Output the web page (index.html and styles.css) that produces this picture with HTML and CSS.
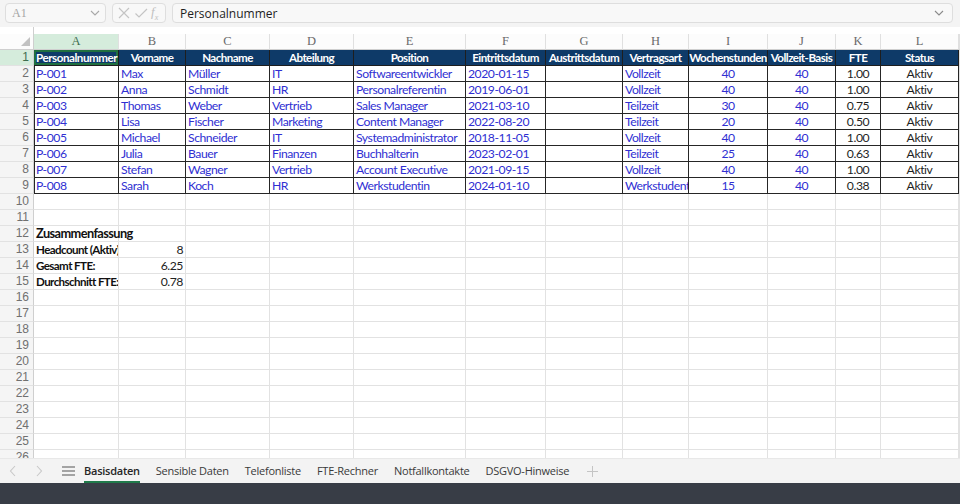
FILE: index.html
```html
<!DOCTYPE html>
<html lang="de">
<head>
<meta charset="utf-8">
<title>Basisdaten</title>
<link rel="stylesheet" href="styles.css">
</head>
<body>
<div class="toolbar">
  <div class="namebox"><span>A1</span>
    <svg width="10" height="6" viewBox="0 0 10 6"><path d="M1 1 L5 5 L9 1" fill="none" stroke="#a8a8a8" stroke-width="1.1"/></svg>
  </div>
  <div class="fxbox">
    <svg width="14" height="14" viewBox="0 0 14 14"><path d="M2 2 L12 12 M12 2 L2 12" stroke="#c4c4c4" stroke-width="1.2"/></svg>
    <svg width="14" height="14" viewBox="0 0 14 14"><path d="M1.5 7.5 L5 11 L13 3" fill="none" stroke="#c4c4c4" stroke-width="1.2"/></svg>
    <span class="fx">f<sub>x</sub></span>
  </div>
  <div class="formula"><span>Personalnummer</span>
    <svg width="10" height="6" viewBox="0 0 10 6"><path d="M1 1 L5 5 L9 1" fill="none" stroke="#8a8a8a" stroke-width="1.1"/></svg>
  </div>
</div>

<div class="sheet">
<table class="grid">
<colgroup>
<col class="c-rh"><col class="c-a"><col class="c-b"><col class="c-c"><col class="c-d"><col class="c-e"><col class="c-f"><col class="c-g"><col class="c-h"><col class="c-i"><col class="c-j"><col class="c-k"><col class="c-l"><col class="c-m">
</colgroup>
<tr class="spacer"><th class="corner-top"></th><td colspan="13"></td></tr>
<tr class="colhead"><th class="corner"><span class="tri"></span></th><th class="sel">A</th><th>B</th><th>C</th><th>D</th><th>E</th><th>F</th><th>G</th><th>H</th><th>I</th><th>J</th><th>K</th><th>L</th><th></th></tr>
<tr class="hdr"><th class="rh sel">1</th><td class="first active">Personalnummer</td><td>Vorname</td><td>Nachname</td><td>Abteilung</td><td>Position</td><td>Eintrittsdatum</td><td>Austrittsdatum</td><td>Vertragsart</td><td>Wochenstunden</td><td>Vollzeit-Basis</td><td>FTE</td><td>Status</td><td class="m"></td></tr>
<tr class="dat"><th class="rh">2</th><td class="first">P-001</td><td>Max</td><td>Müller</td><td>IT</td><td>Softwareentwickler</td><td>2020-01-15</td><td></td><td>Vollzeit</td><td class="ctr">40</td><td class="ctr">40</td><td class="ctr blk">1.00</td><td class="ctr blk">Aktiv</td><td class="m"></td></tr>
<tr class="dat"><th class="rh">3</th><td class="first">P-002</td><td>Anna</td><td>Schmidt</td><td>HR</td><td>Personalreferentin</td><td>2019-06-01</td><td></td><td>Vollzeit</td><td class="ctr">40</td><td class="ctr">40</td><td class="ctr blk">1.00</td><td class="ctr blk">Aktiv</td><td class="m"></td></tr>
<tr class="dat"><th class="rh">4</th><td class="first">P-003</td><td>Thomas</td><td>Weber</td><td>Vertrieb</td><td>Sales Manager</td><td>2021-03-10</td><td></td><td>Teilzeit</td><td class="ctr">30</td><td class="ctr">40</td><td class="ctr blk">0.75</td><td class="ctr blk">Aktiv</td><td class="m"></td></tr>
<tr class="dat"><th class="rh">5</th><td class="first">P-004</td><td>Lisa</td><td>Fischer</td><td>Marketing</td><td>Content Manager</td><td>2022-08-20</td><td></td><td>Teilzeit</td><td class="ctr">20</td><td class="ctr">40</td><td class="ctr blk">0.50</td><td class="ctr blk">Aktiv</td><td class="m"></td></tr>
<tr class="dat"><th class="rh">6</th><td class="first">P-005</td><td>Michael</td><td>Schneider</td><td>IT</td><td>Systemadministrator</td><td>2018-11-05</td><td></td><td>Vollzeit</td><td class="ctr">40</td><td class="ctr">40</td><td class="ctr blk">1.00</td><td class="ctr blk">Aktiv</td><td class="m"></td></tr>
<tr class="dat"><th class="rh">7</th><td class="first">P-006</td><td>Julia</td><td>Bauer</td><td>Finanzen</td><td>Buchhalterin</td><td>2023-02-01</td><td></td><td>Teilzeit</td><td class="ctr">25</td><td class="ctr">40</td><td class="ctr blk">0.63</td><td class="ctr blk">Aktiv</td><td class="m"></td></tr>
<tr class="dat"><th class="rh">8</th><td class="first">P-007</td><td>Stefan</td><td>Wagner</td><td>Vertrieb</td><td>Account Executive</td><td>2021-09-15</td><td></td><td>Vollzeit</td><td class="ctr">40</td><td class="ctr">40</td><td class="ctr blk">1.00</td><td class="ctr blk">Aktiv</td><td class="m"></td></tr>
<tr class="dat"><th class="rh">9</th><td class="first">P-008</td><td>Sarah</td><td>Koch</td><td>HR</td><td>Werkstudentin</td><td>2024-01-10</td><td></td><td>Werkstudent</td><td class="ctr">15</td><td class="ctr">40</td><td class="ctr blk">0.38</td><td class="ctr blk">Aktiv</td><td class="m"></td></tr>
<tr><th class="rh">10</th><td></td><td></td><td></td><td></td><td></td><td></td><td></td><td></td><td></td><td></td><td></td><td></td><td></td></tr>
<tr><th class="rh">11</th><td></td><td></td><td></td><td></td><td></td><td></td><td></td><td></td><td></td><td></td><td></td><td></td><td></td></tr>
<tr><th class="rh">12</th><td class="spill title">Zusammenfassung</td><td></td><td></td><td></td><td></td><td></td><td></td><td></td><td></td><td></td><td></td><td></td><td></td></tr>
<tr><th class="rh">13</th><td class="lbl">Headcount (Aktiv)</td><td class="num">8</td><td></td><td></td><td></td><td></td><td></td><td></td><td></td><td></td><td></td><td></td><td></td></tr>
<tr><th class="rh">14</th><td class="lbl">Gesamt FTE:</td><td class="num">6.25</td><td></td><td></td><td></td><td></td><td></td><td></td><td></td><td></td><td></td><td></td><td></td></tr>
<tr><th class="rh">15</th><td class="lbl">Durchschnitt FTE:</td><td class="num">0.78</td><td></td><td></td><td></td><td></td><td></td><td></td><td></td><td></td><td></td><td></td><td></td></tr>
<tr><th class="rh">16</th><td></td><td></td><td></td><td></td><td></td><td></td><td></td><td></td><td></td><td></td><td></td><td></td><td></td></tr>
<tr><th class="rh">17</th><td></td><td></td><td></td><td></td><td></td><td></td><td></td><td></td><td></td><td></td><td></td><td></td><td></td></tr>
<tr><th class="rh">18</th><td></td><td></td><td></td><td></td><td></td><td></td><td></td><td></td><td></td><td></td><td></td><td></td><td></td></tr>
<tr><th class="rh">19</th><td></td><td></td><td></td><td></td><td></td><td></td><td></td><td></td><td></td><td></td><td></td><td></td><td></td></tr>
<tr><th class="rh">20</th><td></td><td></td><td></td><td></td><td></td><td></td><td></td><td></td><td></td><td></td><td></td><td></td><td></td></tr>
<tr><th class="rh">21</th><td></td><td></td><td></td><td></td><td></td><td></td><td></td><td></td><td></td><td></td><td></td><td></td><td></td></tr>
<tr><th class="rh">22</th><td></td><td></td><td></td><td></td><td></td><td></td><td></td><td></td><td></td><td></td><td></td><td></td><td></td></tr>
<tr><th class="rh">23</th><td></td><td></td><td></td><td></td><td></td><td></td><td></td><td></td><td></td><td></td><td></td><td></td><td></td></tr>
<tr><th class="rh">24</th><td></td><td></td><td></td><td></td><td></td><td></td><td></td><td></td><td></td><td></td><td></td><td></td><td></td></tr>
<tr><th class="rh">25</th><td></td><td></td><td></td><td></td><td></td><td></td><td></td><td></td><td></td><td></td><td></td><td></td><td></td></tr>
<tr><th class="rh">26</th><td></td><td></td><td></td><td></td><td></td><td></td><td></td><td></td><td></td><td></td><td></td><td></td><td></td></tr>
</table>
</div>

<div class="tabbar">
  <span class="nav"><svg width="8" height="12" viewBox="0 0 8 12"><path d="M6 1 L1.5 6 L6 11" fill="none" stroke="#c8c8c8" stroke-width="1.1"/></svg></span>
  <span class="nav"><svg width="8" height="12" viewBox="0 0 8 12"><path d="M2 1 L6.5 6 L2 11" fill="none" stroke="#c8c8c8" stroke-width="1.1"/></svg></span>
  <span class="menu"><svg width="13" height="10" viewBox="0 0 13 10"><path d="M0 1 H13 M0 5 H13 M0 9 H13" stroke="#555" stroke-width="1.2"/></svg></span>
  <span class="tab active">Basisdaten</span>
  <span class="tab">Sensible Daten</span>
  <span class="tab">Telefonliste</span>
  <span class="tab">FTE-Rechner</span>
  <span class="tab">Notfallkontakte</span>
  <span class="tab">DSGVO-Hinweise</span>
  <span class="plus"><svg width="11" height="11" viewBox="0 0 11 11"><path d="M5.5 0 V11 M0 5.5 H11" stroke="#c4c4c4" stroke-width="1"/></svg></span>
</div>
<div class="dock"></div>
</body>
</html>
```
FILE: styles.css
```css
* { box-sizing: border-box; }
html, body { margin: 0; padding: 0; }
body {
  width: 960px;
  height: 504px;
  overflow: hidden;
  display: flex;
  flex-direction: column;
  background: #ffffff;
  font-family: Lato, "Liberation Sans", sans-serif;
}

/* ---------- formula bar ---------- */
.toolbar {
  height: 27px;
  flex: none;
  display: flex;
  align-items: center;
  gap: 6px;
  padding: 0 7px 1px 5px;
  background: #f4f4f4;
}
.namebox {
  width: 101px;
  height: 20px;
  display: flex;
  align-items: center;
  justify-content: space-between;
  padding: 0 5px 0 6px;
  border: 1px solid #dedede;
  border-radius: 4px;
  background: #f8f8f8;
  color: #a5a5a5;
  font: 12px "Liberation Serif", serif;
}
.fxbox {
  width: 54px;
  height: 20px;
  display: flex;
  align-items: center;
  gap: 3px;
  padding: 0 3px 0 4px;
  border: 1px solid #dedede;
  border-radius: 4px;
  background: #f8f8f8;
}
.fx {
  font: italic 13px "Liberation Serif", serif;
  color: #c0c0c0;
  line-height: 1;
}
.fx sub { font-size: 8px; }
.formula {
  flex: 1;
  height: 20px;
  display: flex;
  align-items: center;
  justify-content: space-between;
  padding: 0 8px 0 7px;
  border: 1px solid #dedede;
  border-radius: 4px;
  background: #f8f8f8;
  color: #1e1e1e;
  font: 12px "Open Sans", "Liberation Sans", sans-serif;
}

/* ---------- grid ---------- */
.sheet {
  flex: 1;
  overflow: hidden;
  background: #fff;
}
.grid {
  table-layout: fixed;
  width: 960px;
  border-collapse: separate;
  border-spacing: 0;
  font-size: 12.2px;
  letter-spacing: -0.45px;
}
.c-rh { width: 34px; }
.c-a { width: 85px; }
.c-b { width: 67px; }
.c-c { width: 84px; }
.c-d { width: 84px; }
.c-e { width: 112px; }
.c-f { width: 80px; }
.c-g { width: 77px; }
.c-h { width: 66px; }
.c-i { width: 79px; }
.c-j { width: 68px; }
.c-k { width: 45px; }
.c-l { width: 78px; }
.c-m { width: 1px; }

.grid td, .grid th {
  height: 16px;
  padding: 0 2px;
  border-right: 1px solid #e2e2e2;
  border-bottom: 1px solid #e2e2e2;
  white-space: nowrap;
  overflow: hidden;
  line-height: 15px;
  font-weight: normal;
}
.grid tr.spacer td, .grid tr.spacer th {
  height: 7px;
  line-height: 0;
  border-bottom: none;
}
.grid tr.spacer td { border-right: none; }
.grid tr.spacer th.corner-top { border-right: 1px solid #cfcfcf; }

/* column letters */
.colhead th {
  height: 15px;
  line-height: 14px;
  text-align: center;
  font: 12.5px "Liberation Serif", serif;
  letter-spacing: 0;
  color: #6a6a6a;
  background: #fcfcfc;
  border-right: 1px solid #e0e0e0;
  border-bottom: 1px solid #cfcfcf;
}
.colhead th.corner {
  position: relative;
  border-right: 1px solid #cfcfcf;
}
.tri {
  position: absolute;
  right: 3px;
  bottom: 3px;
  width: 0;
  height: 0;
  border-left: 9px solid transparent;
  border-bottom: 9px solid #c2c2c2;
}
.colhead th.sel {
  background: #d5ecdc;
  color: #3e6d50;
}

/* row numbers */
.grid th.rh {
  text-align: right;
  padding: 0 4px 0 0;
  font: 12px "Liberation Sans", sans-serif;
  letter-spacing: 0;
  color: #707070;
  background: #f5f5f5;
  border-right: 1px solid #cfcfcf;
  line-height: 15px;
}
.grid th.rh.sel { background: #d5ecdc; color: #3e6d50; }

/* header row of the table */
.hdr td {
  background: #0e3a68;
  color: #ffffff;
  font-weight: bold;
  font-size: 11.6px;
  letter-spacing: -0.55px;
  text-align: center;
  border-right: 1px solid #1e1e1e;
  border-bottom: 1px solid #1e1e1e;
  padding: 0;
}
.hdr td.first { text-align: left; padding-left: 2px; letter-spacing: -0.45px; }
.hdr td.active {
  box-shadow: inset 0 0 0 2px #1f7040;
}
.grid td.m { background: transparent; border-right-color: #e2e2e2; border-bottom-color: #e2e2e2; box-shadow: none; }

/* data rows */
.dat td {
  color: #2f2fd2;
  border-right: 1px solid #262626;
  border-bottom: 1px solid #262626;
}
.dat td.first { box-shadow: inset 1px 0 0 #262626; }
.dat td.ctr { text-align: center; }
.dat td.blk { color: #1f1f1f; }

/* summary block */
.grid td.spill { overflow: visible; }
.grid td.title { font-size: 12.8px; font-weight: bold; color: #111; letter-spacing: -0.6px; }
.grid td.lbl { font-weight: bold; font-size: 11.6px; color: #111; letter-spacing: -0.6px; }
.grid td.num { text-align: right; color: #222; }

/* ---------- sheet tabs ---------- */
.tabbar {
  height: 25px;
  flex: none;
  display: flex;
  align-items: center;
  background: #f3f3f3;
  border-top: 1px solid #e8e8e8;
  padding-left: 9px;
  font: 11px "Open Sans", "Liberation Sans", sans-serif;
  letter-spacing: -0.25px;
  color: #3a3a3a;
}
.nav { width: 26px; display: flex; align-items: center; }
.menu { width: 22px; display: flex; align-items: center; margin-left: 1px; }
.tab {
  height: 100%;
  display: flex;
  align-items: center;
  margin-right: 16px;
  border-bottom: 2px solid transparent;
}
.tab.active {
  font-weight: 600;
  color: #262626;
  border-bottom-color: #1f7a4a;
}
.plus { display: flex; align-items: center; margin-left: 2px; }

.dock {
  height: 21px;
  flex: none;
  background: #383d46;
}
```
